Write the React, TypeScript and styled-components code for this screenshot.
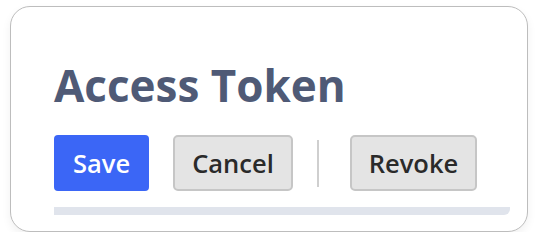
import React from "react";
import styled, { createGlobalStyle } from "styled-components";

const Global = createGlobalStyle`
  html, body { margin: 0; padding: 0; background: #ffffff; }
  body { font-family: "Open Sans", "Noto Sans", sans-serif; }
  * { box-sizing: border-box; }
`;

const Page = styled.div`
  padding: 6px 10px 0 10px;
`;

const Card = styled.section`
  width: 518px;
  border: 1.5px solid #bdbdbd;
  border-radius: 20px;
  background: #ffffff;
  padding: 52px 17px 16px 43px;
  box-shadow: 0 4px 10px rgba(0, 0, 0, 0.06);
`;

const Title = styled.h1`
  margin: 0;
  font-family: "Open Sans", "Noto Sans", sans-serif;
  font-weight: 700;
  font-size: 44px;
  line-height: 53px;
  color: #4f5a76;
  letter-spacing: 0;
`;

const Toolbar = styled.div`
  display: flex;
  align-items: center;
  gap: 24px;
  margin-top: 23px;
`;

const Button = styled.button<{ $primary?: boolean }>`
  font-family: "Open Sans", "Noto Sans", sans-serif;
  font-weight: 600;
  font-size: 25.5px;
  line-height: 36px;
  height: 56px;
  padding: 0 ${(p) => (p.$primary ? "19px" : "17px")};
  border-radius: ${(p) => (p.$primary ? "4px" : "5px")};
  border: ${(p) => (p.$primary ? "none" : "2px solid #c6c6c6")};
  background: ${(p) => (p.$primary ? "#3b66f6" : "#e4e4e4")};
  color: ${(p) => (p.$primary ? "#ffffff" : "#2a2a2a")};
  cursor: pointer;
`;

const Divider = styled.span`
  width: 2px;
  height: 47px;
  background: #cfcfcf;
  margin-right: 7px;
`;

const Track = styled.div`
  margin-top: 16px;
  height: 8px;
  background: #e0e4ec;
  border-radius: 0 0 6px 0;
`;

export default function App() {
  return (
    <>
      <Global />
      <Page>
        <Card>
          <Title>Access Token</Title>
          <Toolbar>
            <Button $primary>Save</Button>
            <Button>Cancel</Button>
            <Divider />
            <Button>Revoke</Button>
          </Toolbar>
          <Track />
        </Card>
      </Page>
    </>
  );
}
